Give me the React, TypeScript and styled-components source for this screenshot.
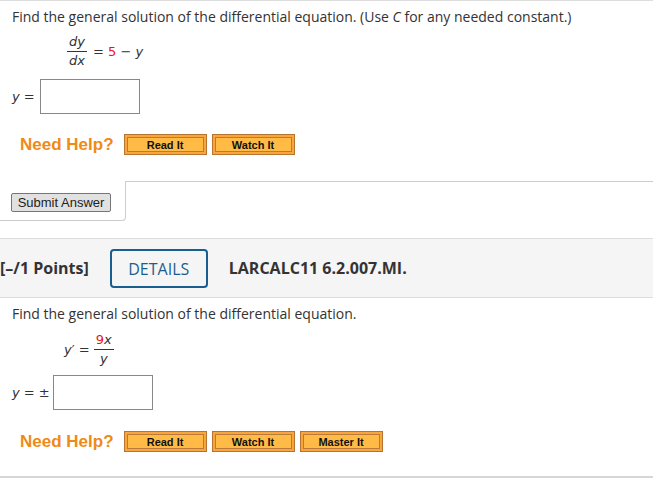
import styled, { createGlobalStyle } from "styled-components";

const GlobalStyle = createGlobalStyle`
  body {
    margin: 0;
    background: #fff;
    font-family: "Open Sans", "Liberation Sans", sans-serif;
    color: #333;
  }
`;

const Page = styled.div`
  width: 653px;
  border-top: 1px solid #ddd;
`;

const Prompt = styled.p<{ $top: number }>`
  margin: ${(p) => p.$top}px 0 0 12px;
  font-size: 14px;
  line-height: 18px;
`;

const Math = styled.div<{ $top: number; $indent: number }>`
  margin: ${(p) => p.$top}px 0 0 ${(p) => p.$indent}px;
  display: flex;
  align-items: center;
  font-family: "DejaVu Sans", Verdana, sans-serif;
  font-size: 13px;
  color: #333;
  white-space: pre;
`;

const V = styled.i`
  font-style: italic;
`;

const Red = styled.span`
  color: #e8131b;
`;

const Frac = styled.span`
  display: inline-flex;
  flex-direction: column;
  align-items: center;
  margin-right: 6px;
`;

const Num = styled.span`
  line-height: 18px;
  padding: 0 2px;
  border-bottom: 1px solid #333;
`;

const Den = styled.span`
  line-height: 18px;
`;

const AnswerBox = styled.input<{ $gap: number }>`
  box-sizing: border-box;
  width: 100px;
  height: 35px;
  margin-left: ${(p) => p.$gap}px;
  border: 1px solid #888;
  background: #fff;
  outline: none;
`;

const HelpRow = styled.div<{ $top: number }>`
  margin: ${(p) => p.$top}px 0 0 20px;
  display: flex;
  align-items: center;
  gap: 5px;
`;

const HelpLabel = styled.span`
  font-family: "Liberation Sans", Arial, sans-serif;
  font-weight: bold;
  font-size: 17px;
  line-height: 21px;
  color: #ef8a16;
  margin-right: 5px;
`;

const HelpButton = styled.button`
  box-sizing: border-box;
  width: 83px;
  height: 21px;
  margin: 0;
  padding: 0;
  border: 1px solid #b5742f;
  background: #ffbb46;
  box-shadow: inset 0 0 0 2px #f9a53b, inset 0 0 0 3px #b97a3a;
  font-family: "Liberation Sans", Arial, sans-serif;
  font-weight: bold;
  font-size: 11px;
  color: #111;
`;

const SubmitRow = styled.div`
  margin-top: 26px;
  display: flex;
`;

const SubmitBox = styled.div`
  box-sizing: border-box;
  width: 126px;
  height: 40px;
  padding: 12px 0 0 11px;
  border-right: 1px solid #ccc;
  border-bottom: 1px solid #ccc;
  border-bottom-right-radius: 4px;
`;

const SubmitRest = styled.div`
  flex: 1;
  border-top: 1px solid #ccc;
`;

const SubmitButton = styled.button`
  display: block;
  box-sizing: border-box;
  width: 100px;
  height: 19px;
  margin: 0;
  padding: 0;
  border: 1px solid #767676;
  border-radius: 2px;
  background: #e1e1e1;
  font-family: "Liberation Sans", Arial, sans-serif;
  font-size: 13px;
  color: #222;
`;

const Header = styled.div`
  margin-top: 17px;
  height: 58px;
  display: flex;
  align-items: center;
  gap: 21px;
  background: #f5f5f5;
  border-top: 1px solid #ddd;
  border-bottom: 1px solid #ddd;
  font-size: 16px;
`;

const Strong = styled.span`
  font-weight: 700;
  color: #333;
`;

const Details = styled.button`
  box-sizing: border-box;
  width: 98px;
  height: 39px;
  margin-top: 1px;
  border: 2px solid #185e8e;
  border-radius: 4px;
  background: transparent;
  font-family: "Open Sans", sans-serif;
  font-size: 16px;
  color: #1c5f8f;
`;

const BottomRule = styled.div`
  margin-top: 24px;
  border-top: 2px solid #d6d6d6;
`;

function HelpButtons({ labels, top }: { labels: string[]; top: number }) {
  return (
    <HelpRow $top={top}>
      <HelpLabel>Need Help?</HelpLabel>
      {labels.map((l) => (
        <HelpButton key={l}>{l}</HelpButton>
      ))}
    </HelpRow>
  );
}

export default function App() {
  return (
    <Page>
      <GlobalStyle />
      <Prompt $top={7}>
        Find the general solution of the differential equation. (Use <i>C</i> for any needed constant.)
      </Prompt>
      <Math $top={7} $indent={67}>
        <Frac>
          <Num>
            <V>dy</V>
          </Num>
          <Den>
            <V>dx</V>
          </Den>
        </Frac>
        {"= "}
        <Red>5</Red>
        {" − "}
        <V>y</V>
      </Math>
      <Math $top={9} $indent={12}>
        <V>y</V>
        {" ="}
        <AnswerBox $gap={5} />
      </Math>
      <HelpButtons labels={["Read It", "Watch It"]} top={20} />

      <SubmitRow>
        <SubmitBox>
          <SubmitButton>Submit Answer</SubmitButton>
        </SubmitBox>
        <SubmitRest />
      </SubmitRow>

      <Header>
        <Strong>[–/1 Points]</Strong>
        <Details>DETAILS</Details>
        <Strong>LARCALC11 6.2.007.MI.</Strong>
      </Header>

      <Prompt $top={7}>Find the general solution of the differential equation.</Prompt>
      <Math $top={8} $indent={64}>
        <V>y</V>
        {"′ = "}
        <Frac>
          <Num>
            <Red>9</Red>
            <V>x</V>
          </Num>
          <Den>
            <V>y</V>
          </Den>
        </Frac>
      </Math>
      <Math $top={7} $indent={12}>
        <V>y</V>
        {" = ±"}
        <AnswerBox $gap={3} />
      </Math>
      <HelpButtons labels={["Read It", "Watch It", "Master It"]} top={21} />
      <BottomRule />
    </Page>
  );
}
